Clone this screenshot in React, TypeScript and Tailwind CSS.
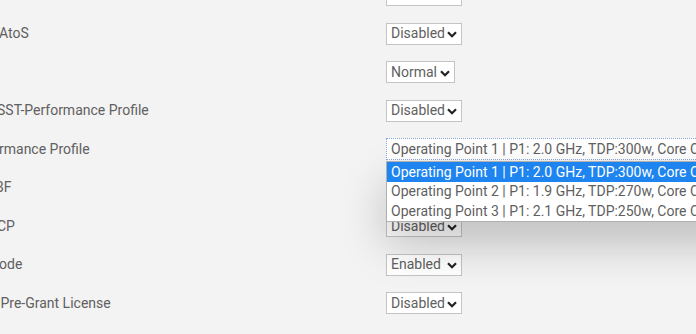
import React from "react";

type Row = {
  label: string;
  shift: number;
  value: string;
  width: number;
};

const rows: Row[] = [
  { label: "", shift: 0, value: "Disabled", width: 76 },
  { label: "AtoS", shift: -1, value: "Disabled", width: 76 },
  { label: "", shift: 0, value: "Normal", width: 69 },
  { label: "SST-Performance Profile", shift: -3, value: "Disabled", width: 76 },
  { label: "rmance Profile", shift: -1, value: "", width: 0 },
  { label: "BF", shift: -5, value: "Disabled", width: 76 },
  { label: "CP", shift: -3, value: "Disabled", width: 76 },
  { label: "ode", shift: -1, value: "Enabled", width: 76 },
  { label: " Pre-Grant License", shift: -3, value: "Disabled", width: 76 },
];

const options = [
  "Operating Point 1 | P1: 2.0 GHz, TDP:300w, Core Count:32",
  "Operating Point 2 | P1: 1.9 GHz, TDP:270w, Core Count:28",
  "Operating Point 3 | P1: 2.1 GHz, TDP:250w, Core Count:24",
];

function Chevron() {
  return (
    <svg width="10" height="7" viewBox="0 0 10 7" className="shrink-0 mt-[2px]">
      <path d="M1 1.2 L5 5.2 L9 1.2" fill="none" stroke="#222" strokeWidth="2.2" />
    </svg>
  );
}

function FakeSelect({ value, width }: { value: string; width: number }) {
  return (
    <div
      className="h-[22px] bg-white border border-[#c4c4c4] flex items-center justify-between pl-[4px] pr-[4px] text-[#5f5f5f]"
      style={{ width }}
    >
      <span className="whitespace-nowrap">{value}</span>
      <Chevron />
    </div>
  );
}

export default function App() {
  return (
    <div
      className="w-[696px] h-[334px] overflow-hidden bg-[#f3f3f3] relative text-[14px] text-[#606060]"
      style={{ fontFamily: "Roboto, 'Liberation Sans', sans-serif" }}
    >
      <div className="mt-[-24px]">
        {rows.map((r, i) => (
          <div key={i} className="h-[38.5px] flex items-center">
            <div className="w-[386px] shrink-0 whitespace-pre overflow-hidden">
              <span className="inline-block" style={{ marginLeft: r.shift }}>
                {r.label}
              </span>
            </div>
            {i === 4 ? (
              <div className="relative">
                <div className="h-[22px] w-[420px] bg-white border border-dotted border-[#8aa6d8] flex items-center pl-[4px] text-[#5f5f5f] whitespace-nowrap">
                  {options[0]}
                </div>
                <div className="absolute left-0 top-[23px] w-[420px] z-10 bg-white border border-[#b0b0b0] shadow-[0_22px_45px_rgba(0,0,0,0.22)]">
                  {options.map((o, j) => (
                    <div
                      key={j}
                      className={
                        "h-[19.5px] flex items-center pl-[4px] whitespace-nowrap " +
                        (j === 0 ? "bg-[#1e84f0] text-white" : "text-[#5f5f5f]")
                      }
                    >
                      {o}
                    </div>
                  ))}
                </div>
              </div>
            ) : (
              <FakeSelect value={r.value} width={r.width} />
            )}
          </div>
        ))}
      </div>
    </div>
  );
}
